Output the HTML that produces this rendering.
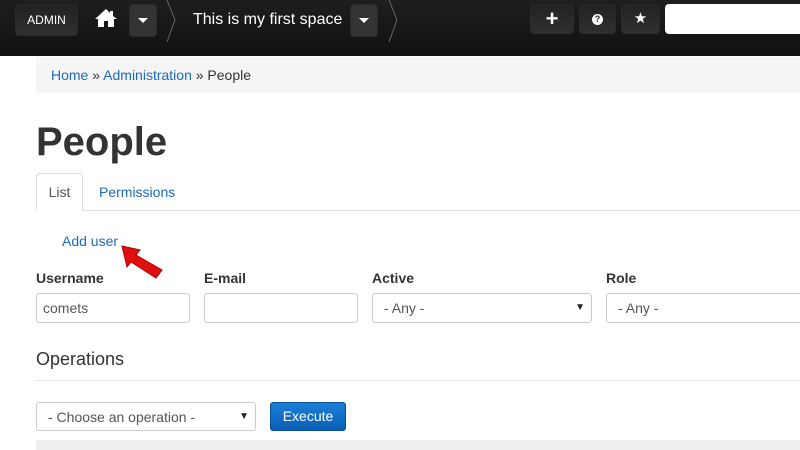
<!DOCTYPE html>
<html><head><style>
body{margin:0;width:800px;height:450px;overflow:hidden;background:#fff;font-family:"Liberation Sans",Arial,sans-serif;position:relative}
.top{position:absolute;left:0;top:0;width:800px;height:56px;background:linear-gradient(#1e1e1e,#111)}
.btn{position:absolute;border:1px solid #2a2a2a;border-radius:4px;background:linear-gradient(#222,#303030);color:#fff;box-sizing:border-box;text-align:center}
.abs{position:absolute}
a{color:#1a6bb8;text-decoration:none}
.lbl{position:absolute;top:270px;font-weight:bold;font-size:14px;color:#333}
.inp{position:absolute;top:293px;height:30px;border:1px solid #ccc;border-radius:3px;box-sizing:border-box;font-size:14px;color:#555;padding:6px 6px}
.sel{padding-left:11px}
</style></head><body>
<div class="top">
<div class="btn" style="left:15px;top:4px;width:63px;height:32px;line-height:30px;font-size:12px">ADMIN</div>
<svg class="abs" style="left:94px;top:8px" width="24" height="20" viewBox="0 0 24 20"><path d="M12 1L1 11h3v8h6v-6h4v6h6v-8h3L19 8V3h-3v2z" fill="#fff"/></svg>
<div class="btn" style="left:129px;top:4px;width:28px;height:33px;background:#333"></div>
<div class="abs" style="left:138px;top:18px;border-left:5px solid transparent;border-right:5px solid transparent;border-top:5px solid #fff"></div>
<svg class="abs" style="left:166px;top:0" width="12" height="42"><path d="M1 0L9 20L1 42" stroke="#666" fill="none"/></svg>
<div class="abs" style="left:193px;top:11px;color:#fff;font-size:16px">This is my first space</div>
<div class="btn" style="left:350px;top:4px;width:28px;height:33px;background:#333"></div>
<div class="abs" style="left:359px;top:18px;border-left:5px solid transparent;border-right:5px solid transparent;border-top:5px solid #fff"></div>
<svg class="abs" style="left:388px;top:0" width="12" height="42"><path d="M1 0L9 20L1 42" stroke="#666" fill="none"/></svg>
<div class="btn" style="left:530px;top:4px;width:44px;height:30px;line-height:28px;font-size:22px;font-weight:bold">+</div>
<div class="btn" style="left:579px;top:4px;width:37px;height:30px"><div style="width:11px;height:11px;border-radius:50%;background:#fff;color:#222;font-size:9px;font-weight:bold;line-height:11px;margin:9px auto">?</div></div>
<div class="btn" style="left:621px;top:4px;width:39px;height:30px;line-height:28px;font-size:15px">★</div>
<div class="abs" style="left:665px;top:4px;width:140px;height:30px;background:#fff;border-radius:4px"></div>
</div>
<div class="abs" style="left:36px;top:57px;width:764px;height:36px;background:#f5f5f5;font-size:14px;line-height:36px;color:#333;padding-left:15px;box-sizing:border-box"><a>Home</a> » <a>Administration</a> » People</div>
<div class="abs" style="left:36px;top:120px;font-size:40px;font-weight:bold;color:#333">People</div>
<div class="abs" style="left:36px;top:210px;width:764px;border-top:1px solid #ddd"></div>
<div class="abs" style="left:36px;top:173px;width:47px;height:38px;border:1px solid #ddd;border-bottom:1px solid #fff;border-radius:4px 4px 0 0;box-sizing:border-box;background:#fff;font-size:14px;color:#555;line-height:36px;text-align:center">List</div>
<div class="abs" style="left:99px;top:184px;font-size:14px"><a>Permissions</a></div>
<div class="abs" style="left:62px;top:233px;font-size:14px"><a>Add user</a></div>
<svg class="abs" style="left:118px;top:240px" width="50" height="40"><path d="M4 6L22 10L18 15L44 30L38 38L13 22L9 27z" fill="#e01010" stroke="#a00" stroke-width="1"/></svg>
<div class="lbl" style="left:36px">Username</div>
<div class="lbl" style="left:204px">E-mail</div>
<div class="lbl" style="left:372px">Active</div>
<div class="lbl" style="left:606px">Role</div>
<div class="inp" style="left:36px;width:154px">comets</div>
<div class="inp" style="left:204px;width:154px"></div>
<div class="inp sel" style="left:372px;width:220px">- Any -<span style="position:absolute;right:6px;font-size:10px;color:#222;top:8px">▼</span></div>
<div class="inp sel" style="left:606px;width:200px">- Any -</div>
<div class="abs" style="left:36px;top:349px;font-size:18px;color:#333">Operations</div>
<div class="abs" style="left:36px;top:380px;width:764px;border-top:1px solid #e5e5e5"></div>
<div class="inp sel" style="left:36px;top:402px;width:220px;height:29px">- Choose an operation -<span style="position:absolute;right:6px;font-size:10px;color:#222;top:8px">▼</span></div>
<div class="abs" style="left:270px;top:402px;width:76px;height:29px;background:linear-gradient(#1a7fd8,#0b5fb5);border:1px solid #0a4f9a;border-radius:3px;box-sizing:border-box;color:#fff;font-size:14px;line-height:27px;text-align:center">Execute</div>
<div class="abs" style="left:36px;top:440px;width:764px;height:10px;background:#eee"></div>
</body></html>
